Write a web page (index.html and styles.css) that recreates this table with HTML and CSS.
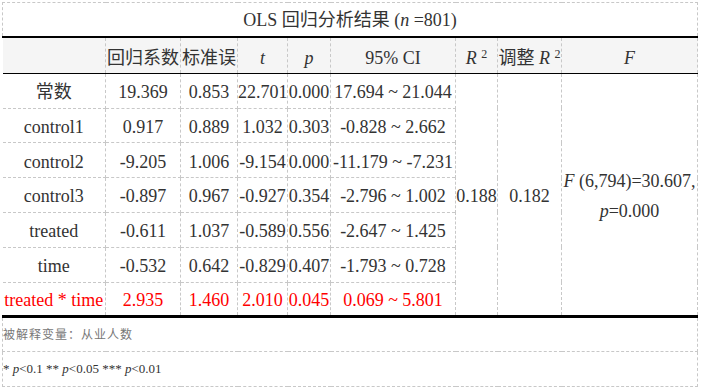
FILE: index.html
```html
<!DOCTYPE html>
<html lang="zh">
<head>
<meta charset="utf-8">
<title>OLS 回归分析结果</title>
<link rel="stylesheet" href="styles.css">
</head>
<body>
<table class="ols">
  <colgroup>
    <col class="c1"><col class="c2"><col class="c3"><col class="c4"><col class="c5"><col class="c6"><col class="c7"><col class="c8"><col class="c9">
  </colgroup>
  <tr class="title-row">
    <td colspan="9" class="title">OLS 回归分析结果 (<i>n</i> =801)</td>
  </tr>
  <tr class="head-row">
    <th class="first"></th>
    <th>回归系数</th>
    <th>标准误</th>
    <th><i>t</i></th>
    <th><i>p</i></th>
    <th>95% CI</th>
    <th><i>R</i> <sup>2</sup></th>
    <th>调整 <i>R</i> <sup>2</sup></th>
    <th><i>F</i></th>
  </tr>
  <tr>
    <td class="first">常数</td>
    <td>19.369</td><td>0.853</td><td>22.701</td><td>0.000</td><td>17.694 ~ 21.044</td>
    <td rowspan="7" class="merged">0.188</td>
    <td rowspan="7" class="merged">0.182</td>
    <td rowspan="7" class="merged fstat"><i>F</i> (6,794)=30.607, <i>p</i>=0.000</td>
  </tr>
  <tr>
    <td class="first">control1</td>
    <td>0.917</td><td>0.889</td><td>1.032</td><td>0.303</td><td>-0.828 ~ 2.662</td>
  </tr>
  <tr>
    <td class="first">control2</td>
    <td>-9.205</td><td>1.006</td><td>-9.154</td><td>0.000</td><td>-11.179 ~ -7.231</td>
  </tr>
  <tr>
    <td class="first">control3</td>
    <td>-0.897</td><td>0.967</td><td>-0.927</td><td>0.354</td><td>-2.796 ~ 1.002</td>
  </tr>
  <tr>
    <td class="first">treated</td>
    <td>-0.611</td><td>1.037</td><td>-0.589</td><td>0.556</td><td>-2.647 ~ 1.425</td>
  </tr>
  <tr>
    <td class="first">time</td>
    <td>-0.532</td><td>0.642</td><td>-0.829</td><td>0.407</td><td>-1.793 ~ 0.728</td>
  </tr>
  <tr class="sig last">
    <td class="first">treated * time</td>
    <td>2.935</td><td>1.460</td><td>2.010</td><td>0.045</td><td>0.069 ~ 5.801</td>
  </tr>
  <tr class="foot-row">
    <td colspan="9" class="note">被解释变量：从业人数</td>
  </tr>
  <tr class="foot-row">
    <td colspan="9" class="stars">* <i>p</i>&lt;0.1 ** <i>p</i>&lt;0.05 *** <i>p</i>&lt;0.01</td>
  </tr>
</table>
</body>
</html>
```

FILE: styles.css
```css
html, body {
  margin: 0;
  padding: 0;
  background: #ffffff;
}

body {
  padding: 2px 0 0 2px;
}

.ols {
  border-collapse: collapse;
  table-layout: fixed;
  width: 696px;
  font-family: "Liberation Serif", "Noto Sans CJK SC", serif;
  font-size: 18px;
  color: #333333;
}

.c1 { width: 103px; }
.c2 { width: 75px; }
.c3 { width: 57px; }
.c4 { width: 50px; }
.c5 { width: 43px; }
.c6 { width: 125px; }
.c7 { width: 42px; }
.c8 { width: 64px; }
.c9 { width: 136px; }

.ols td, .ols th {
  padding: 0;
  text-align: center;
  vertical-align: middle;
  white-space: nowrap;
  border: 1px dashed #c8c8c8;
  font-weight: normal;
  line-height: 22px;
}

.ols i {
  font-style: italic;
}

.ols sup {
  font-size: 12px;
  vertical-align: 6px;
  line-height: 0;
}

.ols .first {
  border-left: none;
}

.title-row td {
  height: 33px;
  border-bottom: 2px solid #000000;
  border-left: 1px dashed #c8c8c8;
}

.head-row th {
  height: 36px;
  padding-top: 4px;
  box-sizing: border-box;
  background: #f5f5f5;
  border-top: 2px solid #000000;
  border-bottom: 1px solid #000000;
}

.ols tr td {
  height: 34.8px;
  padding-top: 2.5px;
  box-sizing: border-box;
}

.ols .fstat {
  white-space: normal;
  line-height: 30px;
}

.sig td {
  color: #ff0000;
}

.ols .last td,
.ols .merged {
  border-bottom: 3px solid #000000;
}

.foot-row td {
  text-align: left;
  border-left: 1px dashed #c8c8c8;
}

.ols .foot-row td {
  height: 35px;
  padding-top: 0;
}

.ols .title-row td {
  padding-top: 0;
}

.note {
  font-size: 12px;
  color: #777777;
  letter-spacing: 1px;
}

.stars {
  font-size: 13px;
  color: #333333;
}
```
